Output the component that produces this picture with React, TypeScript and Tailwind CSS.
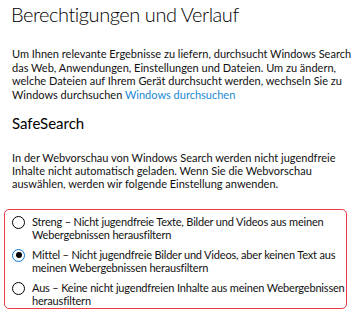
const font = { fontFamily: '"Segoe UI", Lato, sans-serif' }

function Radio({ checked }: { checked?: boolean }) {
  return (
    <span
      className={`mt-[0.5px] flex h-[13px] w-[13px] shrink-0 items-center justify-center rounded-full border-[1.5px] bg-white ${
        checked ? 'border-[#0a78d4]' : 'border-black'
      }`}
    >
      {checked && <span className="h-[6px] w-[6px] rounded-full bg-black" />}
    </span>
  )
}

export default function App() {
  return (
    <div className="h-[313px] w-[354px] overflow-hidden whitespace-nowrap bg-white text-black" style={font}>
      <h1 className="pl-[11px] text-[20px] font-light leading-[28px] tracking-[-0.45px]">
        Berechtigungen und Verlauf
      </h1>

      <p className="mt-[19px] pl-[12px] text-[11px] leading-[13.5px] text-[#111]">
        Um Ihnen relevante Ergebnisse zu liefern, durchsucht Windows Search
        <br />
        das Web, Anwendungen, Einstellungen und Dateien. Um zu ändern,
        <br />
        welche Dateien auf Ihrem Gerät durchsucht werden, wechseln Sie zu
        <br />
        Windows durchsuchen <span className="text-[#1a8ad2]">Windows durchsuchen</span>
      </p>

      <h2 className="mt-[12px] pl-[12px] text-[15px] leading-[20px]">SafeSearch</h2>

      <p className="mt-[18px] pl-[12px] text-[11px] leading-[13px] text-[#111]">
        In der Webvorschau von Windows Search werden nicht jugendfreie
        <br />
        Inhalte nicht automatisch geladen. Wenn Sie die Webvorschau
        <br />
        auswählen, werden wir folgende Einstellung anwenden.
      </p>

      <div className="ml-[4px] mt-[19px] flex w-[343px] flex-col gap-[7px] rounded-[5px] border border-[#ee3a46] pb-[1px] pl-[7px] pt-[5px] text-[11px] leading-[13px] tracking-[-0.18px] text-[#111]">
        <label className="flex items-start gap-[7px]">
          <Radio />
          <span>
            Streng – Nicht jugendfreie Texte, Bilder und Videos aus meinen
            <br />
            Webergebnissen herausfiltern
          </span>
        </label>
        <label className="flex items-start gap-[7px]">
          <Radio checked />
          <span>
            Mittel – Nicht jugendfreie Bilder und Videos, aber keinen Text aus
            <br />
            meinen Webergebnissen herausfiltern
          </span>
        </label>
        <label className="flex items-start gap-[7px]">
          <Radio />
          <span>
            Aus – Keine nicht jugendfreien Inhalte aus meinen Webergebnissen
            <br />
            herausfiltern
          </span>
        </label>
      </div>
    </div>
  )
}
